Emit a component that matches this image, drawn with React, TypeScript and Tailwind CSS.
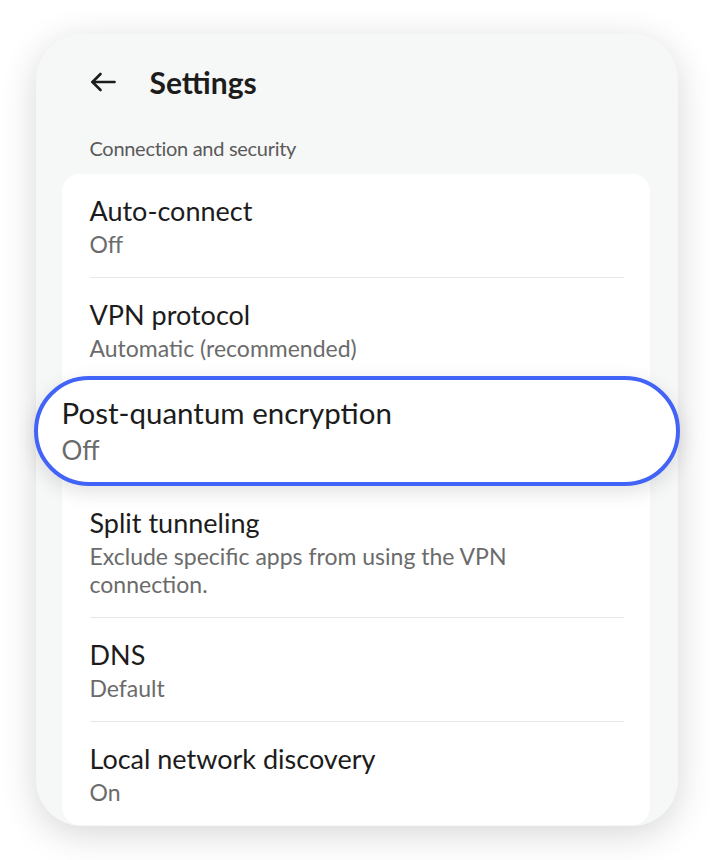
const ROWS = [
  { title: "Auto-connect", sub: "Off" },
  { title: "VPN protocol", sub: "Automatic (recommended)" },
  { title: "Post-quantum encryption", sub: "Off", hidden: true },
  { title: "Split tunneling", sub: "Exclude specific apps from using the VPN connection." },
  { title: "DNS", sub: "Default" },
  { title: "Local network discovery", sub: "On" },
];

function Row({ title, sub, last, hidden }: { title: string; sub: string; last?: boolean; hidden?: boolean }) {
  return (
    <div className="pl-[28px] pr-[26px]">
      <div className={"pt-[22px] pb-[19px] " + (last ? "" : "border-b border-[#e6e7e7]")}>
        <div className={hidden ? "invisible" : ""}>
          <p className="text-[27px] leading-[30px] text-[#1c1c1c]">{title}</p>
          <p className="mt-[4px] max-w-[480px] text-[23px] leading-[28px] text-[#6b6b6b]">{sub}</p>
        </div>
      </div>
    </div>
  );
}

function BackArrow() {
  return (
    <svg width="26" height="22" viewBox="0 0 26 22" fill="none" stroke="#1c1c1c" strokeWidth="2.6" strokeLinecap="round" strokeLinejoin="round">
      <path d="M24.5 11H2.5" />
      <path d="M10.5 3L2.5 11L10.5 19" />
    </svg>
  );
}

export default function App() {
  return (
    <div className="min-h-screen bg-white pt-[34px] font-['Lato',sans-serif]">
      <div className="relative mx-auto h-[792px] w-[642px] rounded-[46px] bg-[#f6f7f7] shadow-[0_8px_36px_rgba(0,0,0,0.16)]">
        <div className="h-full overflow-hidden rounded-[46px]">
          {/* header */}
          <div className="flex h-[96px] items-center pl-[54px]">
            <BackArrow />
            <h1 className="ml-[34px] text-[30px] font-bold text-[#1c1c1c]">Settings</h1>
          </div>
          <p className="pl-[54px] pt-[4px] text-[20px] leading-[28px] tracking-[-0.3px] text-[#5a5a5a]">
            Connection and security
          </p>
          <div className="ml-[26px] mr-[28px] mt-[12px] rounded-[18px] bg-white">
            {ROWS.map((r, i) => (
              <Row key={r.title} title={r.title} sub={r.sub} hidden={r.hidden} last={i === ROWS.length - 1} />
            ))}
          </div>
        </div>

        {/* highlighted row */}
        <div className="absolute left-[-2px] top-[342px] flex h-[110px] w-[646px] flex-col justify-center rounded-full border-[4px] border-[#4263f7] bg-white pl-[24px] shadow-[0_6px_20px_rgba(0,0,0,0.12)]">
          <p className="text-[29.5px] leading-[34px] text-[#1c1c1c]">Post-quantum encryption</p>
          <p className="mt-[4px] text-[26px] leading-[32px] text-[#6b6b6b]">Off</p>
        </div>
      </div>
    </div>
  );
}
